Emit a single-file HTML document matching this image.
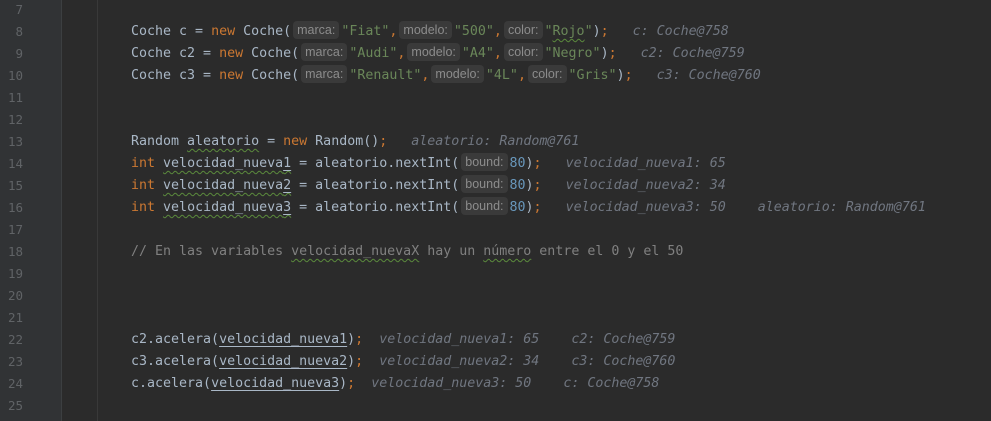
<!DOCTYPE html>
<html><head><meta charset="utf-8"><style>
html,body{margin:0;padding:0;}
body{width:991px;height:421px;background:#2b2b2b;position:relative;overflow:hidden;font-family:"DejaVu Sans Mono","Liberation Mono",monospace;font-size:13.3px;}
.gut{position:absolute;left:0;top:0;width:61px;height:421px;background:#313335;border-right:1px solid #3c3f41;}
.guide{position:absolute;left:97px;top:0;width:1px;height:421px;background:#393939;}
.ln{position:absolute;left:0;width:23px;text-align:right;color:#606366;height:22px;line-height:22px;font-size:12.5px;}
.l{position:absolute;left:131px;height:22px;line-height:22px;white-space:pre;color:#a9b7c6;}
.k{color:#cc7832}.s{color:#6a8759}.n{color:#6897bb}.c{color:#808080}
.h{display:inline-block;font-family:"Liberation Sans",sans-serif;font-size:12.5px;color:#8c8c8c;background:#3a3a3a;border-radius:4px;height:18px;line-height:18px;padding:0 4px;margin:0 2px 0 2px;vertical-align:1px;}
.i{color:#707680;font-style:italic;}
.w{text-decoration:underline wavy #5b8a3c;text-underline-offset:3px;text-decoration-thickness:1px;}
.u{text-decoration:underline;text-underline-offset:3px;}
</style></head><body>
<div class="gut"></div><div class="guide"></div>
<div class="ln" style="top:-1px">7</div>
<div class="ln" style="top:21px">8</div>
<div class="ln" style="top:43px">9</div>
<div class="ln" style="top:65px">10</div>
<div class="ln" style="top:87px">11</div>
<div class="ln" style="top:109px">12</div>
<div class="ln" style="top:131px">13</div>
<div class="ln" style="top:153px">14</div>
<div class="ln" style="top:175px">15</div>
<div class="ln" style="top:197px">16</div>
<div class="ln" style="top:219px">17</div>
<div class="ln" style="top:241px">18</div>
<div class="ln" style="top:263px">19</div>
<div class="ln" style="top:285px">20</div>
<div class="ln" style="top:307px">21</div>
<div class="ln" style="top:329px">22</div>
<div class="ln" style="top:351px">23</div>
<div class="ln" style="top:373px">24</div>
<div class="ln" style="top:395px">25</div>

<div class="l" style="top:21px">Coche c = <span class="k">new</span> Coche(<span class="h">marca:</span><span class="s">"Fiat"</span><span class="k">,</span><span class="h">modelo:</span><span class="s">"500"</span><span class="k">,</span><span class="h">color:</span><span class="s">"<span class="w">Rojo</span>"</span>)<span class="k">;</span>   <span class="i">c: Coche@758</span></div>
<div class="l" style="top:43px">Coche c2 = <span class="k">new</span> Coche(<span class="h">marca:</span><span class="s">"Audi"</span><span class="k">,</span><span class="h">modelo:</span><span class="s">"A4"</span><span class="k">,</span><span class="h">color:</span><span class="s">"Negro"</span>)<span class="k">;</span>   <span class="i">c2: Coche@759</span></div>
<div class="l" style="top:65px">Coche c3 = <span class="k">new</span> Coche(<span class="h">marca:</span><span class="s">"Renault"</span><span class="k">,</span><span class="h">modelo:</span><span class="s">"4L"</span><span class="k">,</span><span class="h">color:</span><span class="s">"Gris"</span>)<span class="k">;</span>   <span class="i">c3: Coche@760</span></div>

<div class="l" style="top:131px">Random <span class="w">aleatorio</span> = <span class="k">new</span> Random()<span class="k">;</span>   <span class="i">aleatorio: Random@761</span></div>
<div class="l" style="top:153px"><span class="k">int</span> <span class="w">velocidad_nueva<span class="u">1</span></span> = aleatorio.nextInt(<span class="h">bound:</span><span class="n">80</span>)<span class="k">;</span>   <span class="i">velocidad_nueva1: 65</span></div>
<div class="l" style="top:175px"><span class="k">int</span> <span class="w">velocidad_nueva<span class="u">2</span></span> = aleatorio.nextInt(<span class="h">bound:</span><span class="n">80</span>)<span class="k">;</span>   <span class="i">velocidad_nueva2: 34</span></div>
<div class="l" style="top:197px"><span class="k">int</span> <span class="w">velocidad_nueva<span class="u">3</span></span> = aleatorio.nextInt(<span class="h">bound:</span><span class="n">80</span>)<span class="k">;</span>   <span class="i">velocidad_nueva3: 50    aleatorio: Random@761</span></div>

<div class="l c" style="top:241px">// En las variables <span class="w">velocidad_nuevaX</span> hay un <span class="w">número</span> entre el 0 y el 50</div>

<div class="l" style="top:329px">c2.acelera(<span class="u">velocidad_nueva1</span>)<span class="k">;</span>  <span class="i">velocidad_nueva1: 65    c2: Coche@759</span></div>
<div class="l" style="top:351px">c3.acelera(<span class="u">velocidad_nueva2</span>)<span class="k">;</span>  <span class="i">velocidad_nueva2: 34    c3: Coche@760</span></div>
<div class="l" style="top:373px">c.acelera(<span class="u">velocidad_nueva3</span>)<span class="k">;</span>  <span class="i">velocidad_nueva3: 50    c: Coche@758</span></div>
</body></html>
